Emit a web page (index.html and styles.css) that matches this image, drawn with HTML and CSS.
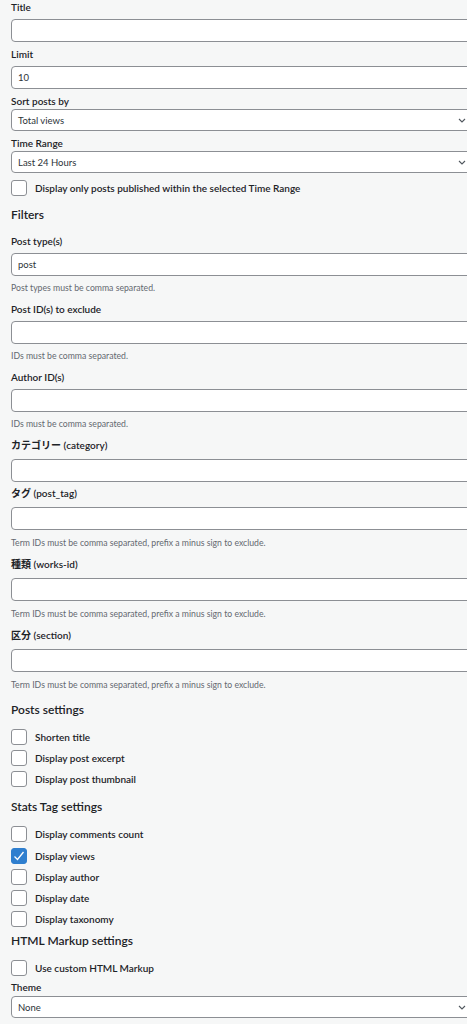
FILE: index.html
```html
<!DOCTYPE html>
<html lang="ja">
<head>
    <meta charset="UTF-8">
    <meta name="viewport" content="width=device-width, initial-scale=1.0">
    <title>Popular Posts widget</title>
    <link rel="stylesheet" href="styles.css">
</head>
<body>
    <div class="widget">
        <!-- 基本設定 -->
        <label class="lbl first">Title</label>
        <input type="text" class="input">

        <label class="lbl">Limit</label>
        <input type="text" class="input" value="10">

        <label class="lbl">Sort posts by</label>
        <div class="select"><span>Total views</span><svg width="8" height="5" viewBox="0 0 8 5"><path d="M1 1l3 3 3-3" fill="none" stroke="#50575e" stroke-width="1.1"/></svg></div>

        <label class="lbl">Time Range</label>
        <div class="select"><span>Last 24 Hours</span><svg width="8" height="5" viewBox="0 0 8 5"><path d="M1 1l3 3 3-3" fill="none" stroke="#50575e" stroke-width="1.1"/></svg></div>

        <div class="check-row after-select"><span class="box"></span>Display only posts published within the selected Time Range</div>

        <!-- フィルター -->
        <h3 class="heading">Filters</h3>

        <label class="lbl after-heading">Post type(s)</label>
        <input type="text" class="input" value="post">
        <p class="help">Post types must be comma separated.</p>

        <label class="lbl">Post ID(s) to exclude</label>
        <input type="text" class="input">
        <p class="help">IDs must be comma separated.</p>

        <label class="lbl">Author ID(s)</label>
        <input type="text" class="input">
        <p class="help">IDs must be comma separated.</p>

        <label class="lbl cjk">カテゴリー (category)</label>
        <input type="text" class="input">

        <label class="lbl cjk tight">タグ (post_tag)</label>
        <input type="text" class="input">
        <p class="help">Term IDs must be comma separated, prefix a minus sign to exclude.</p>

        <label class="lbl cjk">種類 (works-id)</label>
        <input type="text" class="input">
        <p class="help">Term IDs must be comma separated, prefix a minus sign to exclude.</p>

        <label class="lbl cjk">区分 (section)</label>
        <input type="text" class="input">
        <p class="help">Term IDs must be comma separated, prefix a minus sign to exclude.</p>

        <!-- 投稿設定 -->
        <h3 class="heading">Posts settings</h3>
        <div class="check-row first-row"><span class="box"></span>Shorten title</div>
        <div class="check-row"><span class="box"></span>Display post excerpt</div>
        <div class="check-row"><span class="box"></span>Display post thumbnail</div>

        <h3 class="heading after-checks">Stats Tag settings</h3>
        <div class="check-row first-row"><span class="box"></span>Display comments count</div>
        <div class="check-row is-checked"><span class="box checked"><svg width="14" height="14" viewBox="0 0 14 14"><path d="M2.5 7.5l3 3 6-7.5" fill="none" stroke="#fff" stroke-width="1.3"/></svg></span>Display views</div>
        <div class="check-row"><span class="box"></span>Display author</div>
        <div class="check-row"><span class="box"></span>Display date</div>
        <div class="check-row"><span class="box"></span>Display taxonomy</div>

        <h3 class="heading heading-tight">HTML Markup settings</h3>
        <div class="check-row first-row"><span class="box"></span>Use custom HTML Markup</div>

        <label class="lbl theme">Theme</label>
        <div class="select sel-theme"><span>None</span><svg width="8" height="5" viewBox="0 0 8 5"><path d="M1 1l3 3 3-3" fill="none" stroke="#50575e" stroke-width="1.1"/></svg></div>
    </div>
</body>
</html>
```

FILE: styles.css
```css
/* 共通 */
body {
    margin: 0;
    background-color: #f6f7f7;
    font-family: Lato, "Noto Sans CJK JP", sans-serif;
    color: #1d2327;
    overflow: hidden;
}

.widget {
    padding: 0 0 0 11px;
}

.lbl {
    display: block;
    margin-top: 5px;
    font-size: 10px;
    font-weight: 600;
    line-height: 14px;
}

.lbl.first {
    margin-top: 0;
}

.lbl.cjk {
    line-height: 16px;
}

.help + .lbl {
    margin-top: 8px;
}

.help + .lbl.cjk {
    margin-top: 7px;
}

.lbl.after-heading {
    margin-top: 10px;
}

.lbl.tight {
    margin-top: 3px;
}

.lbl.theme {
    margin-top: 4px;
}

/* 入力欄 */
.input,
.select {
    display: flex;
    align-items: center;
    box-sizing: border-box;
    width: 470px;
    height: 23px;
    margin: 5px 0 0;
    padding: 0 6px;
    border: 1px solid #8c8f94;
    border-radius: 4px;
    background-color: #fff;
    font-family: Lato, sans-serif;
    font-size: 9.5px;
    color: #2c3338;
    outline: none;
}

.lbl.cjk + .input {
    margin-top: 6px;
}

.select {
    justify-content: space-between;
    height: 22px;
    margin-top: 1px;
    padding-right: 14px;
}

.select.sel-theme {
    margin-top: 2px;
}

.help {
    margin: 6px 0 0;
    font-size: 8.7px;
    line-height: 12px;
    color: #646970;
}

.lbl.cjk + .input + .help {
    margin-top: 7px;
}

/* 見出し */
.heading {
    margin: 10px 0 0;
    font-size: 12px;
    font-weight: 600;
    line-height: 18px;
}

.heading.after-checks {
    margin-top: 11px;
}

.heading.heading-tight {
    margin-top: 5px;
}

/* チェックボックス */
.check-row {
    display: flex;
    align-items: center;
    margin-top: 5px;
    height: 16px;
    font-size: 10px;
    font-weight: 600;
}

.check-row.after-select {
    margin-top: 7px;
}

.check-row.first-row {
    margin-top: 10px;
}

.check-row.is-checked {
    margin-top: 6px;
}

.box {
    display: flex;
    align-items: center;
    justify-content: center;
    box-sizing: border-box;
    width: 16px;
    height: 16px;
    margin-right: 8px;
    border: 1px solid #8c8f94;
    border-radius: 3px;
    background-color: #fff;
}

.box.checked {
    border-color: #2f7fcf;
    background-color: #2f7fcf;
}
```
